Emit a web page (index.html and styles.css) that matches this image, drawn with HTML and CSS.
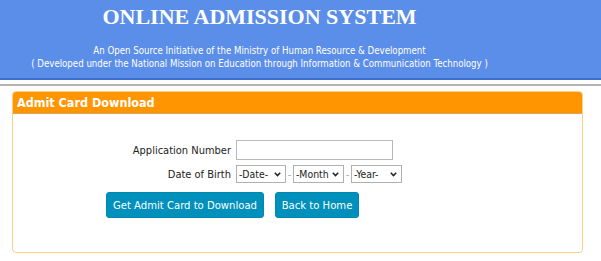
FILE: index.html
```html
<!DOCTYPE html>
<html>
<head>
<meta charset="utf-8">
<link rel="stylesheet" href="styles.css">
</head>
<body>
<div class="header">
  <h1 class="title">ONLINE ADMISSION SYSTEM</h1>
  <p class="sub">An Open Source Initiative of the Ministry of Human Resource &amp; Development</p>
  <p class="sub">( Developed under the National Mission on Education through Information &amp; Communication Technology )</p>
</div>
<div class="rule"></div>
<div class="panel">
  <div class="panel-head">Admit Card Download</div>
  <div class="panel-body">
    <div class="form">
      <div class="row">
        <label class="lbl">Application Number</label>
        <input class="txt" type="text">
      </div>
      <div class="row">
        <label class="lbl">Date of Birth</label>
        <div class="dob">
          <select class="sel sel-date"><option>-Date-</option></select>
          <span class="dash">-</span>
          <select class="sel sel-month"><option>-Month</option></select>
          <span class="dash">-</span>
          <select class="sel sel-year"><option>-Year-</option></select>
        </div>
      </div>
    </div>
    <div class="buttons">
      <button class="btn btn-get">Get Admit Card to Download</button>
      <button class="btn btn-home">Back to Home</button>
    </div>
  </div>
</div>
</body>
</html>
```
FILE: styles.css
```css
html, body { margin: 0; padding: 0; background: #fff; }
body { font-family: "DejaVu Sans Condensed", "DejaVu Sans", sans-serif; color: #222; }
.header {
  background: #5b8ee8;
  height: 78px;
  border-bottom: 2px solid #3d6fcf;
  text-align: center;
  color: #fff;
  padding-right: 82px;
}
.title {
  margin: 0;
  padding-top: 3px;
  font-family: "Liberation Serif", "Times New Roman", serif;
  font-weight: bold;
  font-size: 22px;
  line-height: 28px;
}
.sub {
  margin: 0;
  font-size: 9.6px;
  line-height: 13px;
  white-space: nowrap;
}
.header .title + .sub { margin-top: 13px; }
.rule { height: 0; border-top: 2px solid #b4b4b4; margin-top: 4px; }
.panel {
  margin: 5px 18px 0 12px;
  border: 1px solid #ffcf85;
  border-radius: 4px;
  height: 160px;
  overflow: hidden;
}
.panel-head {
  background: #ff9500;
  color: #fff;
  font-weight: bold;
  font-size: 12.5px;
  height: 21px;
  line-height: 21px;
  padding-left: 4px;
  border-bottom: 1px solid #e0a060;
}
.panel-body { padding-top: 26px; }
.form { display: flex; flex-direction: column; gap: 5px; margin-left: 110px; }
.row { display: flex; align-items: center; }
.lbl { width: 108px; text-align: right; font-size: 11px; color: #222; margin-right: 5px; white-space: nowrap; }
.txt {
  width: 157px; height: 20px; box-sizing: border-box;
  border: 1px solid #b8b8b8; margin: 0; padding: 0;
}
.dob { display: flex; align-items: center; }
.sel {
  -webkit-appearance: none; appearance: none;
  height: 18px; box-sizing: border-box;
  font-family: "DejaVu Sans Condensed", sans-serif; font-size: 10.4px;
  border: 1px solid #b0b0b0; color: #222;
  margin: 0; padding: 0 0 0 2px;
  background: #fff url("data:image/svg+xml;utf8,<svg xmlns='http://www.w3.org/2000/svg' width='7' height='5' viewBox='0 0 7 5'><path d='M0.8 0.8 L3.5 3.6 L6.2 0.8' fill='none' stroke='%23222' stroke-width='1.5'/></svg>") no-repeat right 4px center;
  border-radius: 0;
}
.sel-date { width: 50px; }
.sel-month { width: 51px; }
.sel-year { width: 51px; }
.dash { color: #aaa; font-size: 11px; width: 7px; text-align: center; }
.buttons { display: flex; gap: 11px; margin-left: 93px; margin-top: 9px; }
.btn {
  background: #0090bc; color: #fff; border: 1px solid #0088b0;
  border-radius: 3px; height: 26px; padding: 0;
  font-family: "DejaVu Sans Condensed", sans-serif; font-size: 11.2px;
  white-space: nowrap;
}
.btn-get { width: 158px; }
.btn-home { width: 84px; }
```
